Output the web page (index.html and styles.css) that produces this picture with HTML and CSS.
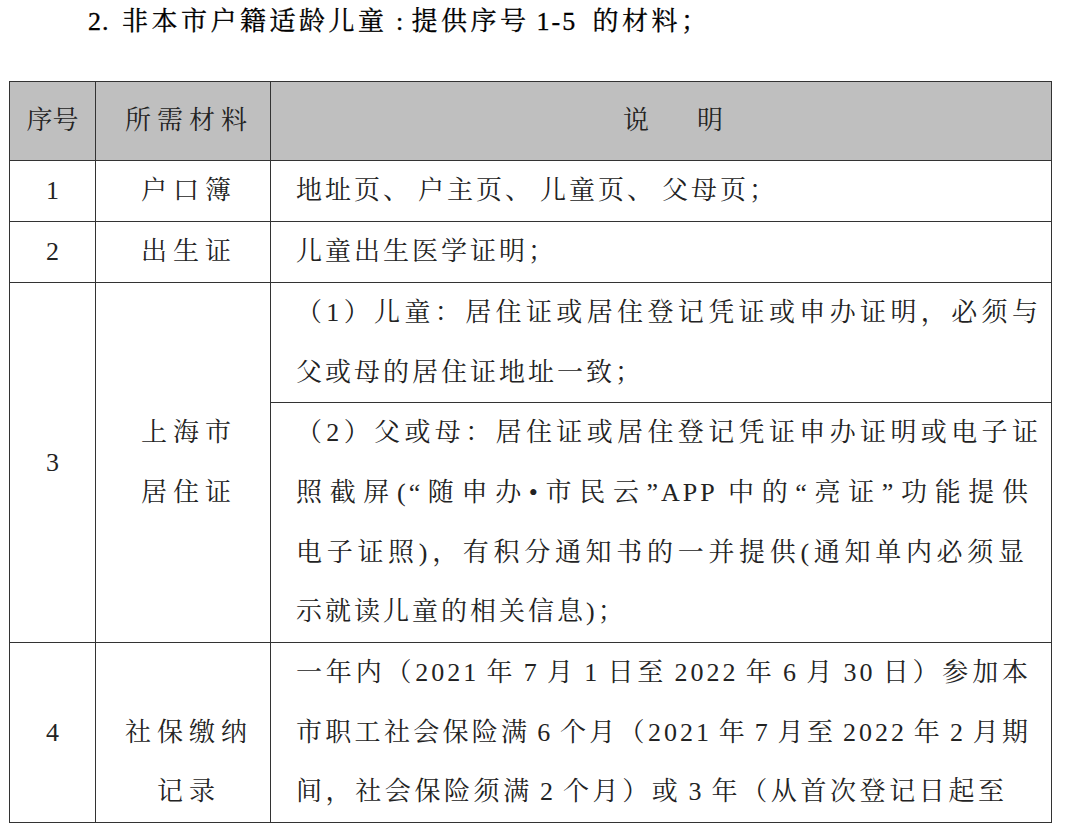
FILE: index.html
```html
<!DOCTYPE html>
<html lang="zh-CN">
<head>
<meta charset="utf-8">
<title>非本市户籍适龄儿童材料</title>
<link rel="stylesheet" href="styles.css">
</head>
<body>
<p class="title"><span class="t-num">2.</span>非本市户籍适龄儿童<span class="t-colon">:</span>提供序号<span class="t-range">1-5</span>的材料；</p>
<table class="tbl">
  <colgroup><col class="c1"><col class="c2"><col class="c3"></colgroup>
  <thead>
    <tr class="head">
      <th class="num">序号</th>
      <th class="mat">所需材料</th>
      <th class="h-desc">说明</th>
    </tr>
  </thead>
  <tbody>
    <tr>
      <td class="num">1</td>
      <td class="mat">户口簿</td>
      <td class="desc"><div class="ln">地址页<span class="dun">、</span>户主页<span class="dun">、</span>儿童页<span class="dun">、</span>父母页；</div></td>
    </tr>
    <tr>
      <td class="num">2</td>
      <td class="mat">出生证</td>
      <td class="desc"><div class="ln">儿童出生医学证明；</div></td>
    </tr>
    <tr class="r3a">
      <td class="num" rowspan="2">3</td>
      <td class="mat" rowspan="2">上海市<br>居住证</td>
      <td class="desc"><div class="ln jl">（1）儿童：居住证或居住登记凭证或申办证明，必须与</div><div class="ln">父或母的居住证地址一致；</div></td>
    </tr>
    <tr class="r3b">
      <td class="desc"><div class="ln jl">（2）父或母：居住证或居住登记凭证申办证明或电子证</div><div class="ln jl r1">照截屏(“随申办•市民云”APP 中的“亮证”功能提供</div><div class="ln jl r2">电子证照)，有积分通知书的一并提供(通知单内必须显</div><div class="ln">示就读儿童的相关信息)；</div></td>
    </tr>
    <tr class="r4">
      <td class="num">4</td>
      <td class="mat top"><br>社保缴纳<br>记录</td>
      <td class="desc wide"><div class="ln jl">一年内（2021 年 7 月 1 日至 2022 年 6 月 30 日）参加本</div><div class="ln jl">市职工社会保险满 6 个月（2021 年 7 月至 2022 年 2 月期</div><div class="ln jl r3">间，社会保险须满 2 个月）或 3 年（从首次登记日起至</div></td>
    </tr>
  </tbody>
</table>
</body>
</html>
```
FILE: styles.css
```css
body {
  margin: 0;
  background: #fff;
  font-family: "Liberation Serif", "Tinos", "Times New Roman", "Noto Serif CJK SC", "Noto Sans CJK SC", serif;
  color: #232323;
}

.title {
  margin: 0;
  height: 81px;
  padding-left: 88px;
  font-size: 26px;
  line-height: 44px;
  letter-spacing: 3.5px;
  color: #000;
  white-space: nowrap;
  -webkit-text-stroke: 0.3px #000;
}

.t-num {
  display: inline-block;
  width: 34px;
  letter-spacing: 1px;
}

.t-colon {
  display: inline-block;
  width: 24px;
  text-align: center;
  letter-spacing: 0;
}

.t-range {
  display: inline-block;
  width: 56px;
  padding-left: 7px;
  letter-spacing: 2px;
}

.tbl {
  margin-left: 9px;
  border-collapse: collapse;
  table-layout: fixed;
  width: 1042px;
}

.c1 { width: 86px; }
.c2 { width: 175px; }
.c3 { width: 781px; }

.tbl th,
.tbl td {
  border: 1px solid #333;
  padding: 0;
  font-size: 26px;
  line-height: 60px;
  font-weight: 400;
  vertical-align: middle;
}

.head th {
  background: #bfbfbf;
  height: 78px;
  line-height: 78px;
}

.r3a td { line-height: 59.5px; }
.r3b td { line-height: 59.75px; }
.r4 td { line-height: 59.67px; }

.num {
  text-align: center;
}

.mat {
  text-align: center;
  letter-spacing: 6px;
  padding-left: 12px !important;
}

.mat.top {
  vertical-align: top;
}

.h-desc {
  text-align: center;
  letter-spacing: 48px;
  padding-left: 72px !important;
}

.desc {
  padding: 0 10px 0 25px !important;
  letter-spacing: 3px;
  word-spacing: -3px;
}

.desc.wide {
  padding-right: 20px !important;
}

.dun {
  margin-right: 6px;
}

.jl {
  text-align: justify;
  text-align-last: justify;
}

.r1 { margin-right: 10px; }
.r2 { margin-right: 14px; }
.r3 { margin-right: 24px; }
```
